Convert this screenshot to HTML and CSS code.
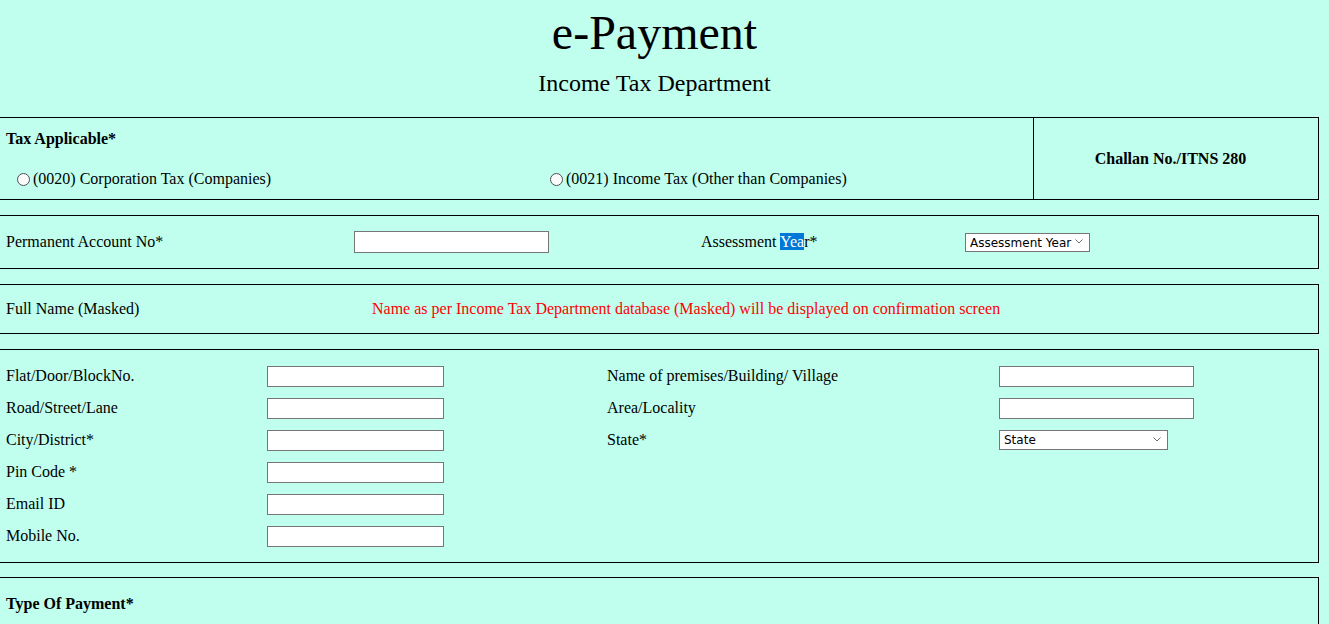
FILE: index.html
```html
<!DOCTYPE html>
<html>
<head>
<meta charset="utf-8">
<title>e-Payment</title>
<link rel="stylesheet" href="styles.css">
</head>
<body>
<div class="header">
  <div class="title">e-Payment</div>
  <div class="subtitle">Income Tax Department</div>
</div>

<div class="box tax-box">
  <div class="tax-left">
    <div class="bold-label">Tax Applicable*</div>
    <div class="radio-row">
      <label class="radio-opt first"><input type="radio" name="tax"><span>(0020) Corporation Tax (Companies)</span></label>
      <label class="radio-opt"><input type="radio" name="tax"><span>(0021) Income Tax (Other than Companies)</span></label>
    </div>
  </div>
  <div class="tax-right">Challan No./ITNS 280</div>
</div>

<div class="box pan-box">
  <div class="cell">Permanent Account No*</div>
  <div class="cell"><input type="text" class="inp pan-inp"></div>
  <div class="cell"><span>Assessment <span class="sel">Yea</span>r*</span></div>
  <div class="cell">
    <span class="dd-wrap">
      <select class="dd ay-dd"><option>Assessment Year</option></select>
      <svg class="chev" width="8" height="5" viewBox="0 0 8 5"><path d="M0.5 0.5 L4 4 L7.5 0.5" fill="none" stroke="#6d6d6d" stroke-width="1"/></svg>
    </span>
  </div>
</div>

<div class="box name-box">
  <div class="cell">Full Name (Masked)</div>
  <div class="cell red">Name as per Income Tax Department database (Masked) will be displayed on confirmation screen</div>
</div>

<div class="box addr-box">
  <div class="cell">Flat/Door/BlockNo.</div>
  <div class="cell"><input type="text" class="inp addr-inp"></div>
  <div class="cell">Name of premises/Building/ Village</div>
  <div class="cell"><input type="text" class="inp addr-inp2"></div>

  <div class="cell">Road/Street/Lane</div>
  <div class="cell"><input type="text" class="inp addr-inp"></div>
  <div class="cell">Area/Locality</div>
  <div class="cell"><input type="text" class="inp addr-inp2"></div>

  <div class="cell">City/District*</div>
  <div class="cell"><input type="text" class="inp addr-inp"></div>
  <div class="cell">State*</div>
  <div class="cell">
    <span class="dd-wrap">
      <select class="dd state-dd"><option>State</option></select>
      <svg class="chev" width="8" height="5" viewBox="0 0 8 5"><path d="M0.5 0.5 L4 4 L7.5 0.5" fill="none" stroke="#6d6d6d" stroke-width="1"/></svg>
    </span>
  </div>

  <div class="cell">Pin Code *</div>
  <div class="cell"><input type="text" class="inp addr-inp"></div>
  <div class="cell"></div>
  <div class="cell"></div>

  <div class="cell">Email ID</div>
  <div class="cell"><input type="text" class="inp addr-inp"></div>
  <div class="cell"></div>
  <div class="cell"></div>

  <div class="cell">Mobile No.</div>
  <div class="cell"><input type="text" class="inp addr-inp"></div>
  <div class="cell"></div>
  <div class="cell"></div>
</div>

<div class="box pay-box">
  <div class="bold-label">Type Of Payment*</div>
</div>
</body>
</html>
```

FILE: styles.css
```css
html, body {
  margin: 0;
  padding: 0;
  background: #c0ffee;
}
body {
  font-family: "Liberation Serif", "Times New Roman", serif;
  font-size: 16px;
  color: #000;
  overflow: hidden;
}
.header {
  text-align: center;
  padding-top: 5px;
  padding-bottom: 20px;
  padding-right: 20px;
}
.title {
  font-size: 48px;
  line-height: 56px;
}
.subtitle {
  font-size: 24px;
  line-height: 28px;
  margin-top: 8px;
}
.box {
  margin: 0 10px 15px -1px;
  border: 1px solid #000;
}
.tax-box {
  display: grid;
  grid-template-columns: 1033px 1fr;
  height: 81px;
}
.tax-left {
  padding: 11px 0 0 6px;
}
.bold-label {
  font-weight: bold;
  line-height: 20px;
}
.radio-row {
  display: flex;
  margin-top: 20px;
  padding-left: 6px;
  line-height: 20px;
}
.radio-opt {
  display: flex;
  align-items: center;
}
.radio-opt.first {
  width: 533px;
}
.radio-opt input {
  appearance: none;
  -webkit-appearance: none;
  box-sizing: border-box;
  margin: 0 3px 0 5px;
  width: 13px;
  height: 13px;
  border: 1px solid #4f4f4f;
  border-radius: 50%;
  background: #fbfbfb;
}
.tax-right {
  border-left: 1px solid #000;
  display: flex;
  align-items: center;
  justify-content: center;
  font-weight: bold;
  padding-right: 11px;
}
.cell {
  display: flex;
  align-items: center;
}
.pan-box {
  display: grid;
  grid-template-columns: 348px 347px 264px 1fr;
  height: 52px;
  padding-left: 6px;
  align-items: center;
}
.name-box {
  display: grid;
  grid-template-columns: 366px 1fr;
  height: 48px;
  padding-left: 6px;
  align-items: center;
}
.red {
  color: #ff0000;
}
.addr-box {
  display: grid;
  grid-template-columns: 261px 340px 392px 1fr;
  grid-auto-rows: 32px;
  padding: 10px 0 10px 6px;
  margin-bottom: 14px;
}
.inp {
  box-sizing: border-box;
  background: #fff;
  border: 1px solid #767676;
  margin: 0;
  padding: 1px 2px;
  font-size: 13px;
}
.pan-inp {
  width: 195px;
  height: 22px;
  margin-top: -1px;
}
.addr-inp {
  width: 177px;
  height: 21px;
}
.addr-inp2 {
  width: 195px;
  height: 21px;
}
.dd-wrap {
  position: relative;
  display: inline-flex;
}
.dd {
  appearance: none;
  -webkit-appearance: none;
  box-sizing: border-box;
  background: #fff;
  border: 1px solid #767676;
  border-radius: 0;
  font-family: "DejaVu Sans", "Liberation Sans", sans-serif;
  font-size: 12px;
  margin: 0;
  padding: 0 0 0 4px;
  color: #000;
}
.chev {
  position: absolute;
  right: 7px;
  top: 7px;
}
.ay-dd {
  width: 125px;
  height: 19px;
  margin-top: 1px;
}
.state-dd {
  width: 169px;
  height: 20px;
}
.sel {
  background: #0078d7;
  color: #fff;
}
.pay-box {
  padding: 16px 0 0 6px;
  height: 60px;
}
```
